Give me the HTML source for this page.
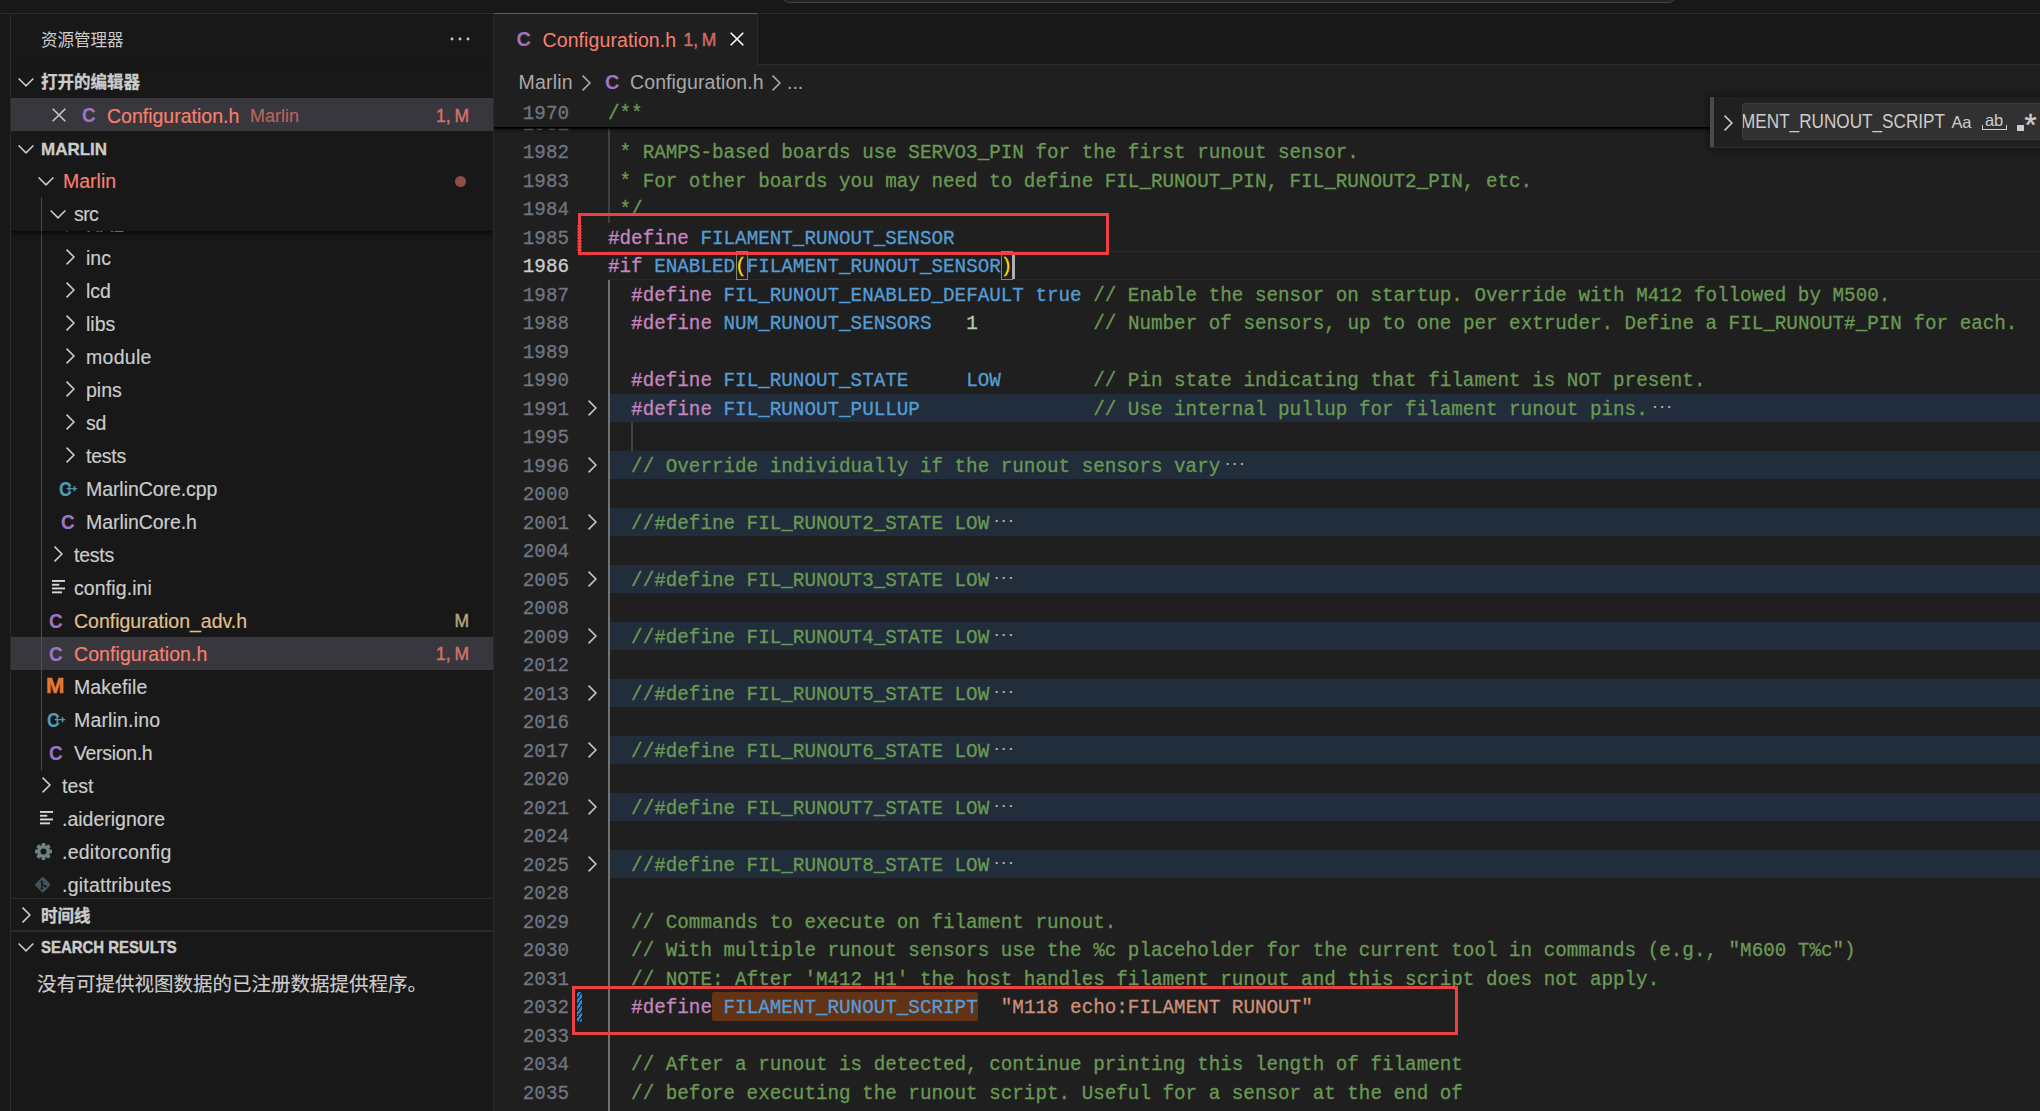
<!DOCTYPE html><html lang="zh-CN"><head><meta charset="utf-8"><title>Configuration.h - Marlin</title><style>
*{box-sizing:border-box}
#root{position:absolute;left:0;top:0;width:2040px;height:1111px;overflow:hidden}
html,body{margin:0;padding:0;background:#181818}
html{width:2040px;height:1111px;overflow:hidden}
body{width:2040px;height:1111px;overflow:hidden;position:relative;
 font-family:"Liberation Sans","Noto Sans CJK SC",sans-serif;font-size:19.5px;color:#cccccc;
 -webkit-font-smoothing:antialiased}
.abs{position:absolute}
#titlebar{position:absolute;left:0;top:0;width:2040px;height:14px;background:#181818;border-bottom:1.5px solid #2b2b2b;overflow:hidden;height:13.5px}
#cmd{position:absolute;left:781px;top:-30px;width:896px;height:33px;border:1.5px solid #454545;border-radius:9px;background:#222222}
#actbar{position:absolute;left:0;top:13.5px;width:11px;height:1097.5px;background:#181818;border-right:1px solid #2b2b2b}
#side{position:absolute;left:11px;top:13.5px;width:483px;height:1097.5px;background:#181818;border-right:1.5px solid #2b2b2b;overflow:hidden}
#ed{position:absolute;left:494px;top:13.5px;width:1546px;height:1097.5px;background:#1f1f1f;clip-path:inset(-1px 0 0 0)}
/* sidebar */
.row{position:absolute;left:0;width:481.5px;height:33px;line-height:33px;white-space:nowrap;-webkit-text-stroke:0.15px}
.row .t{position:absolute;top:1.6px}
.row.fx .t,.row.fx .badge{top:0.7px}
.row .ic{position:absolute}
.row .badge{position:absolute;right:23.5px;top:1.6px;font-size:17.5px;word-spacing:-1px;-webkit-text-stroke:0.45px}
.row .badge.mod{color:#b9a47c}
.row .badge.err{color:#d3726a}
.sel{background:#37373d}
.hdr{font-weight:bold;font-size:16.5px;color:#cccccc}
.err{color:#f88070}
.mod{color:#e2c08d}
.ci{position:absolute;font-weight:bold;font-size:20px;line-height:33px;top:0.8px;font-family:"Liberation Sans",sans-serif}
svg{position:absolute;overflow:visible}
/* editor */
.ln{position:absolute;left:0;width:75px;text-align:right;font-family:"Liberation Mono",monospace;font-size:19.25px;line-height:28.5px;height:28.5px;color:#6e7681;white-space:pre;transform:translateY(1.9px) scaleY(1.02);transform-origin:50% 72%;-webkit-text-stroke:0.3px}
.cl{position:absolute;left:114px;font-family:"Liberation Mono",monospace;font-size:19.25px;line-height:28.5px;height:28.5px;white-space:pre;color:#d4d4d4;transform:translateY(1.9px) scaleY(1.03);transform-origin:50% 72%;-webkit-text-stroke:0.3px}
.band{position:absolute;left:114px;width:1432px;height:28.5px;background:#212d3a}
.c{color:#6a9955}.k{color:#c586c0}.m{color:#569cd6}.n{color:#b5cea8}.s{color:#ce9178}.y{color:#ffd700}
.dots{position:absolute;color:#b4b4bc;font-family:"Liberation Sans",sans-serif;font-size:19px;letter-spacing:0.8px;line-height:28.5px;height:28.5px;white-space:pre;transform:translateY(-1.6px)}
.guide{position:absolute;width:1.5px;background:#404040}
.guide.a{background:#727272;width:1.5px}
.redbox{position:absolute;border:3.4px solid #ee3f42}
.bm{position:absolute;border:1.5px solid #85857c;height:29px;width:12px;margin-left:0.8px}
</style></head><body><div id="root">
<div id="titlebar"><div id="cmd"></div></div>
<div id="actbar"></div>
<div id="side">
<div class="abs" style="left:30px;top:11px;height:30px;line-height:30px;font-size:16.5px;color:#cccccc;white-space:nowrap">资源管理器</div>
<div class="abs" style="left:438px;top:22.6px;width:22px;height:6px"><svg width="22" height="6" viewBox="0 0 22 6"><circle cx="3" cy="3" r="1.45" fill="#ccc"/><circle cx="11" cy="3" r="1.45" fill="#ccc"/><circle cx="19" cy="3" r="1.45" fill="#ccc"/></svg></div>
<div class="row " style="top:194.4px"><svg class="abs" style="left:47.2px;top:4.5px" width="24" height="24" viewBox="0 0 16 16"><path d="M5.7 3.1 L10.6 8 L5.7 12.9" fill="none" stroke="#cccccc" stroke-width="1.05"/></svg><span class="t " style="left:75px">HAL</span></div>
<div class="row " style="top:227.39999999999998px"><svg class="abs" style="left:47.2px;top:4.5px" width="24" height="24" viewBox="0 0 16 16"><path d="M5.7 3.1 L10.6 8 L5.7 12.9" fill="none" stroke="#cccccc" stroke-width="1.05"/></svg><span class="t " style="left:75px">inc</span></div>
<div class="row " style="top:260.4px"><svg class="abs" style="left:47.2px;top:4.5px" width="24" height="24" viewBox="0 0 16 16"><path d="M5.7 3.1 L10.6 8 L5.7 12.9" fill="none" stroke="#cccccc" stroke-width="1.05"/></svg><span class="t " style="left:75px">lcd</span></div>
<div class="row " style="top:293.4px"><svg class="abs" style="left:47.2px;top:4.5px" width="24" height="24" viewBox="0 0 16 16"><path d="M5.7 3.1 L10.6 8 L5.7 12.9" fill="none" stroke="#cccccc" stroke-width="1.05"/></svg><span class="t " style="left:75px">libs</span></div>
<div class="row " style="top:326.4px"><svg class="abs" style="left:47.2px;top:4.5px" width="24" height="24" viewBox="0 0 16 16"><path d="M5.7 3.1 L10.6 8 L5.7 12.9" fill="none" stroke="#cccccc" stroke-width="1.05"/></svg><span class="t " style="left:75px;letter-spacing:0.29px">module</span></div>
<div class="row " style="top:359.4px"><svg class="abs" style="left:47.2px;top:4.5px" width="24" height="24" viewBox="0 0 16 16"><path d="M5.7 3.1 L10.6 8 L5.7 12.9" fill="none" stroke="#cccccc" stroke-width="1.05"/></svg><span class="t " style="left:75px">pins</span></div>
<div class="row " style="top:392.4px"><svg class="abs" style="left:47.2px;top:4.5px" width="24" height="24" viewBox="0 0 16 16"><path d="M5.7 3.1 L10.6 8 L5.7 12.9" fill="none" stroke="#cccccc" stroke-width="1.05"/></svg><span class="t " style="left:75px;letter-spacing:-0.3px">sd</span></div>
<div class="row " style="top:425.4px"><svg class="abs" style="left:47.2px;top:4.5px" width="24" height="24" viewBox="0 0 16 16"><path d="M5.7 3.1 L10.6 8 L5.7 12.9" fill="none" stroke="#cccccc" stroke-width="1.05"/></svg><span class="t " style="left:75px;letter-spacing:-0.25px">tests</span></div>
<div class="row " style="top:458.4px"><span class="ci" style="left:48.2px;color:#519aba;font-size:21px;transform:scaleX(0.84);transform-origin:0 50%;top:0.3px">C</span><span class="ci" style="left:55.5px;color:#519aba;font-size:9.5px;letter-spacing:-0.2px;top:-0.2px;-webkit-text-stroke:0.35px #519aba">++</span><span class="t " style="left:75px;letter-spacing:-0.07px">MarlinCore.cpp</span></div>
<div class="row " style="top:491.4px"><span class="ci" style="left:50px;color:#a074c4;font-size:21px;transform:scaleX(0.9);transform-origin:0 50%;top:0.3px">C</span><span class="t " style="left:75px;letter-spacing:-0.06px">MarlinCore.h</span></div>
<div class="row " style="top:524.4px"><svg class="abs" style="left:35.2px;top:4.5px" width="24" height="24" viewBox="0 0 16 16"><path d="M5.7 3.1 L10.6 8 L5.7 12.9" fill="none" stroke="#cccccc" stroke-width="1.05"/></svg><span class="t " style="left:63px;letter-spacing:-0.25px">tests</span></div>
<div class="row " style="top:557.4px"><svg class="abs" style="left:41px;top:8.8px" width="16" height="16" viewBox="0 0 16 16"><rect x="0" y="0" width="13" height="1.9" fill="#d4d7d6"/><rect x="0" y="3.8" width="7.3" height="1.9" fill="#d4d7d6"/><rect x="0" y="7.5" width="13" height="1.9" fill="#d4d7d6"/><rect x="0" y="11.4" width="10" height="1.9" fill="#d4d7d6"/></svg><span class="t " style="left:63px;letter-spacing:0.1px">config.ini</span></div>
<div class="row " style="top:590.4px"><span class="ci" style="left:38px;color:#a074c4;font-size:21px;transform:scaleX(0.9);transform-origin:0 50%;top:0.3px">C</span><span class="t mod" style="left:63px">Configuration_adv.h</span><span class="badge mod">M</span></div>
<div class="row sel" style="top:623.4px"><span class="ci" style="left:38px;color:#a074c4;font-size:21px;transform:scaleX(0.9);transform-origin:0 50%;top:0.3px">C</span><span class="t err" style="left:63px;letter-spacing:0.08px">Configuration.h</span><span class="badge err">1, M</span></div>
<div class="row " style="top:656.4px"><span class="ci" style="left:35px;color:#e37933;font-size:22px;top:-1px;-webkit-text-stroke:0.5px #e37933">M</span><span class="t " style="left:63px;letter-spacing:0.09px">Makefile</span></div>
<div class="row " style="top:689.4px"><span class="ci" style="left:36.2px;color:#519aba;font-size:21px;transform:scaleX(0.84);transform-origin:0 50%;top:0.3px">C</span><span class="ci" style="left:43.5px;color:#519aba;font-size:9.5px;letter-spacing:-0.2px;top:-0.2px;-webkit-text-stroke:0.35px #519aba">++</span><span class="t " style="left:63px;letter-spacing:0.17px">Marlin.ino</span></div>
<div class="row " style="top:722.4px"><span class="ci" style="left:38px;color:#a074c4;font-size:21px;transform:scaleX(0.9);transform-origin:0 50%;top:0.3px">C</span><span class="t " style="left:63px;letter-spacing:-0.33px">Version.h</span></div>
<div class="row " style="top:755.4px"><svg class="abs" style="left:23.2px;top:4.5px" width="24" height="24" viewBox="0 0 16 16"><path d="M5.7 3.1 L10.6 8 L5.7 12.9" fill="none" stroke="#cccccc" stroke-width="1.05"/></svg><span class="t " style="left:51px">test</span></div>
<div class="row " style="top:788.4px"><svg class="abs" style="left:29px;top:8.8px" width="16" height="16" viewBox="0 0 16 16"><rect x="0" y="0" width="13" height="1.9" fill="#d4d7d6"/><rect x="0" y="3.8" width="7.3" height="1.9" fill="#d4d7d6"/><rect x="0" y="7.5" width="13" height="1.9" fill="#d4d7d6"/><rect x="0" y="11.4" width="10" height="1.9" fill="#d4d7d6"/></svg><span class="t " style="left:51px">.aiderignore</span></div>
<div class="row " style="top:821.4px"><svg class="abs" style="left:23.8px;top:8.2px" width="17" height="17" viewBox="-9 -9 18 18"><rect x="-2" y="-9" width="4" height="5" rx="1" transform="rotate(0)" fill="#6d8086"/><rect x="-2" y="-9" width="4" height="5" rx="1" transform="rotate(45)" fill="#6d8086"/><rect x="-2" y="-9" width="4" height="5" rx="1" transform="rotate(90)" fill="#6d8086"/><rect x="-2" y="-9" width="4" height="5" rx="1" transform="rotate(135)" fill="#6d8086"/><rect x="-2" y="-9" width="4" height="5" rx="1" transform="rotate(180)" fill="#6d8086"/><rect x="-2" y="-9" width="4" height="5" rx="1" transform="rotate(225)" fill="#6d8086"/><rect x="-2" y="-9" width="4" height="5" rx="1" transform="rotate(270)" fill="#6d8086"/><rect x="-2" y="-9" width="4" height="5" rx="1" transform="rotate(315)" fill="#6d8086"/><circle r="5" fill="none" stroke="#6d8086" stroke-width="3.6"/></svg><span class="t " style="left:51px;letter-spacing:0.25px">.editorconfig</span></div>
<div class="row " style="top:854.4px"><svg class="abs" style="left:23.4px;top:8px" width="17.5" height="17.5" viewBox="-9 -9 18 18"><rect x="-6" y="-6" width="12" height="12" rx="1.5" transform="rotate(45)" fill="#43545c"/><path d="M-1 -3 L-1 4 M-1 -1 L2.5 1.5" stroke="#181818" stroke-width="1.4" fill="none"/><circle cx="-1" cy="-3.2" r="1.3" fill="#181818"/><circle cx="-1" cy="3.8" r="1.3" fill="#181818"/><circle cx="2.6" cy="1.6" r="1.3" fill="#181818"/></svg><span class="t " style="left:51px;letter-spacing:0.23px">.gitattributes</span></div>
<div class="guide" style="left:30px;top:183.5px;height:573px;background:#4e4e4e;width:1px"></div>
<div class="abs" style="left:0;top:51.5px;width:481.5px;height:165.5px;background:#181818;box-shadow:0 3px 4px rgba(0,0,0,0.55)"></div>
<div class="row fx" style="top:52.0px"><svg class="abs" style="left:2.8px;top:4.5px" width="24" height="24" viewBox="0 0 16 16"><path d="M3.1 5.7 L8 10.6 L12.9 5.7" fill="none" stroke="#cccccc" stroke-width="1.05"/></svg><span class="t hdr" style="left:30px;-webkit-text-stroke:0.3px">打开的编辑器</span></div>
<div class="row sel" style="top:84.5px"><svg class="abs" style="left:41px;top:9.5px" width="14" height="14" viewBox="0 0 14 14"><path d="M0.7 0.7 L13.3 13.3 M13.3 0.7 L0.7 13.3" stroke="#cccccc" stroke-width="1.5" fill="none"/></svg><span class="ci" style="left:71px;color:#a074c4;font-size:21px;transform:scaleX(0.9);transform-origin:0 50%;top:0.3px">C</span><span class="t err" style="left:96px">Configuration.h</span><span class="t" style="left:239px;font-size:18px;color:#b8675e">Marlin</span><span class="badge err">1, M</span></div>
<div class="row fx" style="top:118.5px"><svg class="abs" style="left:2.8px;top:4.5px" width="24" height="24" viewBox="0 0 16 16"><path d="M3.1 5.7 L8 10.6 L12.9 5.7" fill="none" stroke="#cccccc" stroke-width="1.05"/></svg><span class="t hdr" style="left:30px;font-size:17px;-webkit-text-stroke:0.3px">MARLIN</span></div>
<div class="row fx" style="top:151.0px"><svg class="abs" style="left:22.8px;top:4.5px" width="24" height="24" viewBox="0 0 16 16"><path d="M3.1 5.7 L8 10.6 L12.9 5.7" fill="none" stroke="#cccccc" stroke-width="1.05"/></svg><span class="t err" style="left:52px">Marlin</span><span class="abs" style="left:444px;top:11px;width:11px;height:11px;border-radius:6px;background:#8f4d47"></span></div>
<div class="guide" style="left:30px;top:184.0px;height:33px;background:#4e4e4e;width:1px"></div>
<div class="row fx" style="top:184.0px"><svg class="abs" style="left:34.8px;top:4.5px" width="24" height="24" viewBox="0 0 16 16"><path d="M3.1 5.7 L8 10.6 L12.9 5.7" fill="none" stroke="#cccccc" stroke-width="1.05"/></svg><span class="t" style="left:63px;letter-spacing:-0.6px">src</span></div>
<div class="abs" style="left:0;top:884.5px;width:481.5px;height:213px;background:#181818;border-top:1.5px solid #2b2b2b"></div>
<div class="row " style="top:885.0px"><svg class="abs" style="left:3.2px;top:4.5px" width="24" height="24" viewBox="0 0 16 16"><path d="M5.7 3.1 L10.6 8 L5.7 12.9" fill="none" stroke="#cccccc" stroke-width="1.05"/></svg><span class="t hdr" style="left:30px;-webkit-text-stroke:0.3px">时间线</span></div>
<div class="abs" style="left:0;top:916.7px;width:481.5px;height:1.5px;background:#2b2b2b"></div>
<div class="row fx" style="top:917.3px"><svg class="abs" style="left:2.8px;top:4.5px" width="24" height="24" viewBox="0 0 16 16"><path d="M3.1 5.7 L8 10.6 L12.9 5.7" fill="none" stroke="#cccccc" stroke-width="1.05"/></svg><span class="t hdr" style="left:30px;font-size:17px;transform:scaleX(0.878);transform-origin:0 50%;-webkit-text-stroke:0.45px">SEARCH RESULTS</span></div>
<div class="row fx" style="top:954.0px"><span class="t" style="left:26px">没有可提供视图数据的已注册数据提供程序。</span></div>
</div>
<div id="ed">
<div class="abs" style="left:0;top:0;width:1546px;height:51.5px;background:#181818;border-bottom:1.5px solid #2b2b2b"></div>
<div class="abs" style="left:0;top:-1px;width:264px;height:52.5px;background:#1f1f1f;border-top:1.8px solid #1a6fb5;border-right:1.5px solid #2b2b2b"></div>
<span class="ci" style="left:22.5px;top:9.3px;color:#a074c4">C</span>
<div class="abs err" style="left:48.5px;top:1.8px;height:51.5px;line-height:51.5px;white-space:nowrap;letter-spacing:0.1px">Configuration.h</div>
<div class="abs" style="left:189.5px;top:1.8px;height:51.5px;line-height:51.5px;white-space:nowrap;color:#c96a61;word-spacing:-1.2px;font-size:17.5px;-webkit-text-stroke:0.5px">1, M</div>
<svg class="abs" style="left:236px;top:18.5px" width="14" height="14" viewBox="0 0 14 14"><path d="M0.7 0.7 L13.3 13.3 M13.3 0.7 L0.7 13.3" stroke="#ffffff" stroke-width="1.6" fill="none"/></svg>
<div class="abs" style="left:24.5px;top:52.5px;height:33px;line-height:33px;white-space:nowrap;color:#a9a9a9;letter-spacing:0.2px">Marlin</div>
<svg class="abs" style="left:79.7px;top:57.0px" width="24" height="24" viewBox="0 0 16 16"><path d="M5.7 3.1 L10.6 8 L5.7 12.9" fill="none" stroke="#a9a9a9" stroke-width="1.05"/></svg>
<span class="ci" style="left:111px;top:52.3px;color:#a074c4">C</span>
<div class="abs" style="left:136px;top:52.5px;height:33px;line-height:33px;white-space:nowrap;color:#a9a9a9;letter-spacing:0.1px">Configuration.h</div>
<svg class="abs" style="left:269.7px;top:57.0px" width="24" height="24" viewBox="0 0 16 16"><path d="M5.7 3.1 L10.6 8 L5.7 12.9" fill="none" stroke="#a9a9a9" stroke-width="1.05"/></svg>
<div class="abs" style="left:293px;top:52.5px;height:33px;line-height:33px;white-space:nowrap;color:#a9a9a9">...</div>
<div class="ln" style="top:95.5px">1981</div>
<div class="cl" style="top:95.5px"><span class="c"> *</span></div>
<div class="ln" style="top:123.5px">1982</div>
<div class="cl" style="top:123.5px"><span class="c"> * RAMPS-based boards use SERVO3_PIN for the first runout sensor.</span></div>
<div class="ln" style="top:152.5px">1983</div>
<div class="cl" style="top:152.5px"><span class="c"> * For other boards you may need to define FIL_RUNOUT_PIN, FIL_RUNOUT2_PIN, etc.</span></div>
<div class="ln" style="top:180.5px">1984</div>
<div class="cl" style="top:180.5px"><span class="c"> */</span></div>
<div class="ln" style="top:209.5px">1985</div>
<div class="cl" style="top:209.5px"><span class="k">#define</span><span class="m"> FILAMENT_RUNOUT_SENSOR</span></div>
<div class="abs" style="left:114px;top:237.75px;width:1432px;height:28.5px;border-top:1.5px solid #282828;border-bottom:1.5px solid #282828"></div>
<div class="ln" style="top:237.5px;color:#cccccc">1986</div>
<div class="cl" style="top:237.5px"><span class="k">#if</span><span class="m"> ENABLED</span><span class="y">(</span><span class="m">FILAMENT_RUNOUT_SENSOR</span><span class="y">)</span></div>
<div class="ln" style="top:266.5px">1987</div>
<div class="cl" style="top:266.5px">  <span class="k">#define</span><span class="m"> FIL_RUNOUT_ENABLED_DEFAULT true </span><span class="c">// Enable the sensor on startup. Override with M412 followed by M500.</span></div>
<div class="ln" style="top:294.5px">1988</div>
<div class="cl" style="top:294.5px">  <span class="k">#define</span><span class="m"> NUM_RUNOUT_SENSORS   </span><span class="n">1</span>          <span class="c">// Number of sensors, up to one per extruder. Define a FIL_RUNOUT#_PIN for each.</span></div>
<div class="ln" style="top:323.5px">1989</div>
<div class="ln" style="top:351.5px">1990</div>
<div class="cl" style="top:351.5px">  <span class="k">#define</span><span class="m"> FIL_RUNOUT_STATE     LOW        </span><span class="c">// Pin state indicating that filament is NOT present.</span></div>
<div class="band" style="top:380.25px"></div>
<svg class="abs" style="left:85.9px;top:382.5px" width="24" height="24" viewBox="0 0 16 16"><path d="M5.7 3.1 L10.6 8 L5.7 12.9" fill="none" stroke="#c5c5c5" stroke-width="1.05"/></svg>
<div class="ln" style="top:380.5px">1991</div>
<div class="cl" style="top:380.5px">  <span class="k">#define</span><span class="m"> FIL_RUNOUT_PULLUP               </span><span class="c">// Use internal pullup for filament runout pins.</span></div>
<div class="dots" style="left:1157.80px;top:380.5px">···</div>
<div class="ln" style="top:408.5px">1995</div>
<div class="band" style="top:437.25px"></div>
<svg class="abs" style="left:85.9px;top:439.5px" width="24" height="24" viewBox="0 0 16 16"><path d="M5.7 3.1 L10.6 8 L5.7 12.9" fill="none" stroke="#c5c5c5" stroke-width="1.05"/></svg>
<div class="ln" style="top:437.5px">1996</div>
<div class="cl" style="top:437.5px"><span class="c">  // Override individually if the runout sensors vary</span></div>
<div class="dots" style="left:730.45px;top:437.5px">···</div>
<div class="ln" style="top:465.5px">2000</div>
<div class="band" style="top:494.25px"></div>
<svg class="abs" style="left:85.9px;top:496.5px" width="24" height="24" viewBox="0 0 16 16"><path d="M5.7 3.1 L10.6 8 L5.7 12.9" fill="none" stroke="#c5c5c5" stroke-width="1.05"/></svg>
<div class="ln" style="top:494.5px">2001</div>
<div class="cl" style="top:494.5px"><span class="c">  //#define FIL_RUNOUT2_STATE LOW</span></div>
<div class="dots" style="left:499.45px;top:494.5px">···</div>
<div class="ln" style="top:522.5px">2004</div>
<div class="band" style="top:551.25px"></div>
<svg class="abs" style="left:85.9px;top:553.5px" width="24" height="24" viewBox="0 0 16 16"><path d="M5.7 3.1 L10.6 8 L5.7 12.9" fill="none" stroke="#c5c5c5" stroke-width="1.05"/></svg>
<div class="ln" style="top:551.5px">2005</div>
<div class="cl" style="top:551.5px"><span class="c">  //#define FIL_RUNOUT3_STATE LOW</span></div>
<div class="dots" style="left:499.45px;top:551.5px">···</div>
<div class="ln" style="top:579.5px">2008</div>
<div class="band" style="top:608.25px"></div>
<svg class="abs" style="left:85.9px;top:610.5px" width="24" height="24" viewBox="0 0 16 16"><path d="M5.7 3.1 L10.6 8 L5.7 12.9" fill="none" stroke="#c5c5c5" stroke-width="1.05"/></svg>
<div class="ln" style="top:608.5px">2009</div>
<div class="cl" style="top:608.5px"><span class="c">  //#define FIL_RUNOUT4_STATE LOW</span></div>
<div class="dots" style="left:499.45px;top:608.5px">···</div>
<div class="ln" style="top:636.5px">2012</div>
<div class="band" style="top:665.25px"></div>
<svg class="abs" style="left:85.9px;top:667.5px" width="24" height="24" viewBox="0 0 16 16"><path d="M5.7 3.1 L10.6 8 L5.7 12.9" fill="none" stroke="#c5c5c5" stroke-width="1.05"/></svg>
<div class="ln" style="top:665.5px">2013</div>
<div class="cl" style="top:665.5px"><span class="c">  //#define FIL_RUNOUT5_STATE LOW</span></div>
<div class="dots" style="left:499.45px;top:665.5px">···</div>
<div class="ln" style="top:693.5px">2016</div>
<div class="band" style="top:722.25px"></div>
<svg class="abs" style="left:85.9px;top:724.5px" width="24" height="24" viewBox="0 0 16 16"><path d="M5.7 3.1 L10.6 8 L5.7 12.9" fill="none" stroke="#c5c5c5" stroke-width="1.05"/></svg>
<div class="ln" style="top:722.5px">2017</div>
<div class="cl" style="top:722.5px"><span class="c">  //#define FIL_RUNOUT6_STATE LOW</span></div>
<div class="dots" style="left:499.45px;top:722.5px">···</div>
<div class="ln" style="top:750.5px">2020</div>
<div class="band" style="top:779.25px"></div>
<svg class="abs" style="left:85.9px;top:781.5px" width="24" height="24" viewBox="0 0 16 16"><path d="M5.7 3.1 L10.6 8 L5.7 12.9" fill="none" stroke="#c5c5c5" stroke-width="1.05"/></svg>
<div class="ln" style="top:779.5px">2021</div>
<div class="cl" style="top:779.5px"><span class="c">  //#define FIL_RUNOUT7_STATE LOW</span></div>
<div class="dots" style="left:499.45px;top:779.5px">···</div>
<div class="ln" style="top:807.5px">2024</div>
<div class="band" style="top:836.25px"></div>
<svg class="abs" style="left:85.9px;top:838.5px" width="24" height="24" viewBox="0 0 16 16"><path d="M5.7 3.1 L10.6 8 L5.7 12.9" fill="none" stroke="#c5c5c5" stroke-width="1.05"/></svg>
<div class="ln" style="top:836.5px">2025</div>
<div class="cl" style="top:836.5px"><span class="c">  //#define FIL_RUNOUT8_STATE LOW</span></div>
<div class="dots" style="left:499.45px;top:836.5px">···</div>
<div class="ln" style="top:864.5px">2028</div>
<div class="ln" style="top:893.5px">2029</div>
<div class="cl" style="top:893.5px"><span class="c">  // Commands to execute on filament runout.</span></div>
<div class="ln" style="top:921.5px">2030</div>
<div class="cl" style="top:921.5px"><span class="c">  // With multiple runout sensors use the %c placeholder for the current tool in commands (e.g., "M600 T%c")</span></div>
<div class="ln" style="top:950.5px">2031</div>
<div class="cl" style="top:950.5px"><span class="c">  // NOTE: After 'M412 H1' the host handles filament runout and this script does not apply.</span></div>
<div class="abs" style="left:217.95px;top:978.55px;width:266.15px;height:29px;background:#623315;border-radius:2px"></div>
<div class="ln" style="top:978.5px">2032</div>
<div class="cl" style="top:978.5px">  <span class="k">#define</span><span class="m"> FILAMENT_RUNOUT_SCRIPT</span>  <span class="s">"M118 echo:FILAMENT RUNOUT"</span></div>
<div class="ln" style="top:1007.5px">2033</div>
<div class="ln" style="top:1035.5px">2034</div>
<div class="cl" style="top:1035.5px"><span class="c">  // After a runout is detected, continue printing this length of filament</span></div>
<div class="ln" style="top:1064.5px">2035</div>
<div class="cl" style="top:1064.5px"><span class="c">  // before executing the runout script. Useful for a sensor at the end of</span></div>
<div class="guide" style="left:114px;top:95.25px;height:114.0px"></div>
<div class="guide a" style="left:114px;top:266.25px;height:831.75px"></div>
<div class="guide" style="left:137px;top:408.75px;height:28.5px"></div>
<div class="bm" style="left:241.05px;top:237.75px"></div>
<div class="bm" style="left:506.70000000000005px;top:237.75px"></div>
<div class="abs" style="left:518.25px;top:238.75px;width:2.5px;height:27px;background:#aeafad"></div>
<div class="abs" style="left:82.5px;top:211.25px;width:5px;height:26px;background:repeating-linear-gradient(0deg,#1f6fa0 0 1.5px,transparent 1.5px 3px);opacity:0.8"></div>
<div class="abs" style="left:83px;top:978.75px;width:5.2px;height:29.5px;border-radius:2px;background:repeating-linear-gradient(-55deg,#2a8ad4 0 2.2px,#14314a 2.2px 3.6px)"></div>
<div class="abs" style="left:0;top:84.5px;width:1546px;height:29px;background:#1f1f1f;box-shadow:0 1.6px 0 rgba(0,0,0,0.92),0 3px 3px rgba(0,0,0,0.55)"></div>
<div class="ln" style="top:84.5px">1970</div>
<div class="cl" style="top:84.5px"><span class="c">/**</span></div>
<div class="abs" style="left:1216px;top:83.5px;width:340px;height:51px;background:#202020;border-bottom:1.5px solid #2e2e2e;box-shadow:0 0 8px 2px rgba(0,0,0,0.36)"><div class="abs" style="left:0;top:0;width:3.5px;height:50px;background:#4a4a4a"></div><svg class="abs" style="left:6.2px;top:13.5px" width="24" height="24" viewBox="0 0 16 16"><path d="M5.7 3.1 L10.6 8 L5.7 12.9" fill="none" stroke="#cccccc" stroke-width="1.05"/></svg><div class="abs" style="left:32px;top:6px;width:320px;height:37px;background:#313131;border:1.5px solid #3c3c3c;border-radius:3px 0 0 3px;overflow:hidden"><div class="abs" style="right:115.70000000000005px;top:-1px;height:37px;line-height:37.5px;white-space:nowrap;color:#cccccc;transform:scaleX(0.88);transform-origin:100% 50%">FILAMENT_RUNOUT_SCRIPT</div><div class="abs" style="left:208.5px;top:-1.5px;height:37px;line-height:38px;white-space:nowrap;color:#cccccc;font-size:16.5px;letter-spacing:-0.3px">Aa</div><div class="abs" style="left:242px;top:-2px;height:37px;line-height:36px;white-space:nowrap;color:#cccccc;font-size:16.5px;letter-spacing:-0.3px">ab</div><div class="abs" style="left:238.5px;top:21.3px;width:25px;height:5px;border:1.7px solid #cccccc;border-top:none"></div><div class="abs" style="left:273.8px;top:20.8px;width:7.2px;height:5.8px;background:#cccccc"></div><div class="abs" style="left:281.5px;top:-1.5px;height:37px;line-height:45px;white-space:nowrap;color:#cccccc;font-size:31px;-webkit-text-stroke:0.4px #ccc">*</div></div></div>
<div class="redbox" style="left:83.89999999999998px;top:199.3px;width:531.4px;height:42.29999999999998px"></div>
<div class="redbox" style="left:77.89999999999998px;top:972.5px;width:886.3000000000001px;height:49.200000000000045px"></div>
</div>
</div></body></html>
